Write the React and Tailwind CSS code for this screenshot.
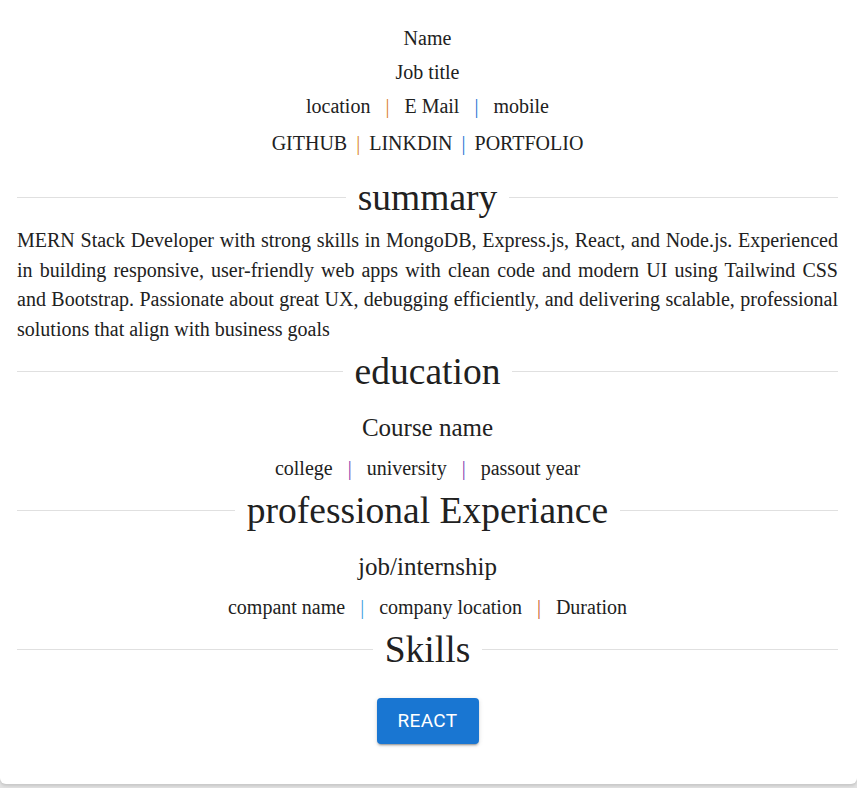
import React from 'react';

const serif = { fontFamily: '"Liberation Serif", "Times New Roman", serif' };

const Bar = ({ color, gap = 'mx-[15px]' }) => (
    <span className={`${gap} ${color}`}>|</span>
);

const Heading = ({ children, className = '' }) => (
    <div className={`flex items-center ${className}`}>
        <div className="flex-1 h-px bg-[#e0e0e0]"></div>
        <h2 className="px-[12px] text-[37.5px] leading-[45px] text-[#212121] whitespace-nowrap">{children}</h2>
        <div className="flex-1 h-px bg-[#e0e0e0]"></div>
    </div>
);

export default function App() {
    return (
        <div className="min-h-[788px] bg-[#e2e2e2]" style={serif}>
            <div className="bg-white rounded-b-[6px] shadow-[0_2px_3px_rgba(0,0,0,0.12)] pl-[17px] pr-[19px] pt-[21px] pb-[40px] text-[#212121]">
                {/* Header */}
                <div className="text-center text-[20px]">
                    <div className="leading-[34px]">Name</div>
                    <div className="leading-[34px]">Job title</div>
                    <div className="leading-[34px]">
                        location<Bar color="text-[#d9822b]" />E Mail<Bar color="text-[#1976d2]" />mobile
                    </div>
                    <div className="leading-[34px] mt-[3px]">
                        GITHUB<Bar color="text-[#d9822b]" gap="mx-[9px]" />LINKDIN<Bar color="text-[#1976d2]" gap="mx-[9px]" />PORTFOLIO
                    </div>
                </div>

                {/* Summary */}
                <Heading className="mt-[15px]">summary</Heading>
                <p className="mt-[6px] text-[20px] leading-[29.7px] text-justify">
                    MERN Stack Developer with strong skills in MongoDB, Express.js, React, and Node.js. Experienced in building responsive, user-friendly web apps with clean code and modern UI using Tailwind CSS and Bootstrap. Passionate about great UX, debugging efficiently, and delivering scalable, professional solutions that align with business goals
                </p>

                {/* Education */}
                <Heading className="mt-[4px]">education</Heading>
                <div className="text-center">
                    <div className="mt-[17px] text-[25px] leading-[34px]">Course name</div>
                    <div className="mt-[8px] text-[20px] leading-[30px]">
                        college<Bar color="text-[#7b3fb0]" />university<Bar color="text-[#7b3fb0]" />passout year
                    </div>
                </div>

                {/* Experience */}
                <Heading className="mt-[5px]">professional Experiance</Heading>
                <div className="text-center">
                    <div className="mt-[17px] text-[25px] leading-[34px]">job/internship</div>
                    <div className="mt-[8px] text-[20px] leading-[30px]">
                        compant name<Bar color="text-[#3b9ce0]" />company location<Bar color="text-[#c8602c]" />Duration
                    </div>
                </div>

                {/* Skills */}
                <Heading className="mt-[5px]">Skills</Heading>
                <div className="flex justify-center mt-[26px]">
                    <button
                        className="h-[46px] w-[102px] rounded-[4px] bg-[#1976d2] text-white text-[19px] font-normal tracking-[0.02em] shadow-[0_3px_1px_-2px_rgba(0,0,0,0.2),0_2px_2px_0_rgba(0,0,0,0.14),0_1px_5px_0_rgba(0,0,0,0.12)]"
                        style={{ fontFamily: 'Roboto, "Liberation Sans", sans-serif' }}
                    >
                        REACT
                    </button>
                </div>
            </div>
        </div>
    );
}
